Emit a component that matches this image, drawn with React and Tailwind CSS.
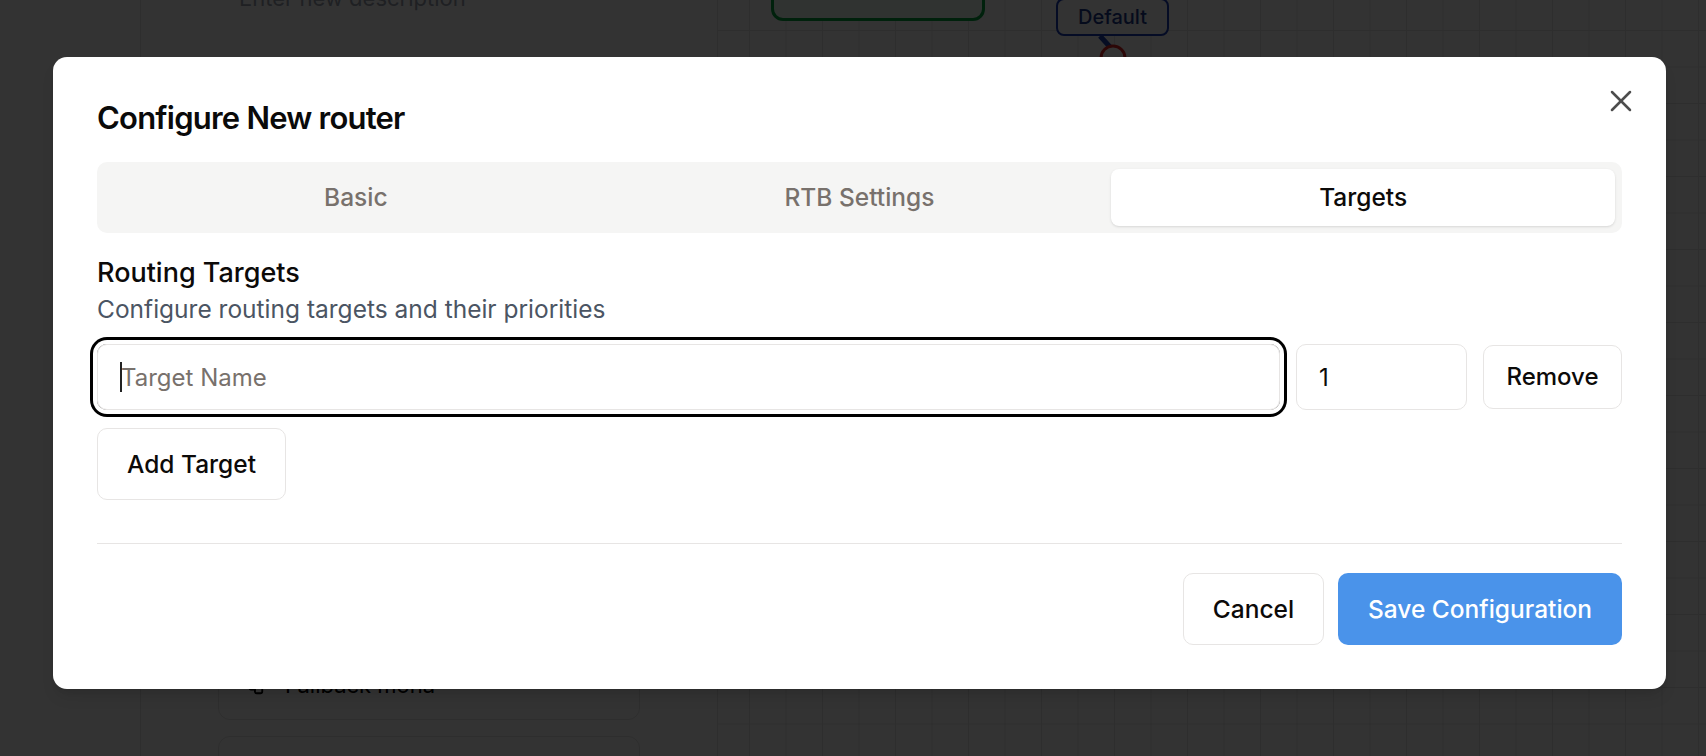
import { X, Workflow } from 'lucide-react';

const tabs = ['Basic', 'RTB Settings', 'Targets'];

export default function App() {
  return (
    <div className="relative h-[756px] w-[1706px] overflow-hidden bg-white font-['Inter',sans-serif]">
      {/* app behind the dialog */}
      <div className="flex h-full">
        <aside className="w-[141px] shrink-0 border-r border-[#e5e5e5]" />
        <div className="flex w-[577px] shrink-0 flex-col justify-between border-r border-[#e5e5e5] px-[77px]">
          <div className="-mt-[18px] pl-[21px] text-[22px] text-gray-400">Enter new description</div>
          <div className="flex flex-col gap-[16px] -mb-[40px]">
            <div className="flex h-[70px] items-center gap-[20px] rounded-[12px] border border-[#e5e5e5] px-[24px]">
              <Workflow className="h-[22px] w-[22px] text-black" />
              <span className="text-[22px] text-black">Fallback mona</span>
            </div>
            <div className="h-[60px] rounded-[12px] border border-[#e5e5e5]" />
          </div>
        </div>
        <div className="relative flex-1 bg-[linear-gradient(to_right,#e4e4e4_1px,transparent_1px),linear-gradient(to_bottom,#e4e4e4_1px,transparent_1px)] [background-size:36.5px_36.5px] [background-position:31px_30px]">
          <div className="absolute left-[53px] top-[-40px] h-[61px] w-[214px] rounded-[12px] border-[3px] border-green-600 bg-green-50" />
          <svg className="absolute left-[330px] top-0" width="80" height="70" viewBox="0 0 80 70">
            <path d="M12 0 L20 30 M52 36 L74 60" stroke="#1e40af" strokeWidth="5" fill="none" />
            <circle cx="65" cy="58" r="12" fill="white" stroke="#dc2626" strokeWidth="3" />
          </svg>
          <div className="absolute left-[338px] top-[-2px] flex h-[38px] w-[113px] items-center justify-center rounded-[8px] border-2 border-blue-800 bg-white text-[20px] font-medium text-blue-900">
            Default
          </div>
        </div>
      </div>

      <div className="absolute inset-0 bg-black/80" />

      {/* dialog */}
      <div role="dialog" className="absolute left-[53px] top-[57px] w-[1613px] rounded-[14px] bg-white px-[44px] pt-[45px] pb-[44px] shadow-lg">
        <button className="absolute right-[27px] top-[26px] text-[#4d4d4d]">
          <X size={36} strokeWidth={1.7} />
        </button>

        <h2 className="text-[31px] font-semibold leading-none tracking-tight text-[#0a0a0a]">Configure New router</h2>

        <div className="mt-[29px] grid h-[71px] grid-cols-3 rounded-[10px] bg-[#f5f5f4] p-[7px]">
          {tabs.map((t) => (
            <div
              key={t}
              className={`flex items-center justify-center rounded-[8px] text-[24.5px] font-medium ${
                t === 'Targets' ? 'bg-white text-[#0c0a09] shadow-sm' : 'text-[#78716c]'
              }`}
            >
              {t}
            </div>
          ))}
        </div>

        <div className="mt-[22px]">
          <h3 className="text-[27px] font-medium leading-[35px] text-[#0c0a09]">Routing Targets</h3>
          <p className="mt-[3px] text-[24.5px] leading-[33px] text-[#4b5563]">Configure routing targets and their priorities</p>
        </div>

        <div className="mt-[18px] flex items-center gap-4">
          <div className="relative flex-1">
            <input
              placeholder="Target Name"
              className="h-[66px] w-full rounded-[10px] border border-[#e7e5e4] px-[23px] text-[24px] text-[#0c0a09] placeholder:text-[#78716c] ring-[3px] ring-black ring-offset-[4px] ring-offset-white outline-none"
            />
            <span className="absolute left-[23px] top-[18px] h-[30px] w-[1.5px] bg-[#222]" />
          </div>
          <input
            readOnly
            value="1"
            className="h-[66px] w-[171px] rounded-[10px] border border-[#e7e5e4] px-[22px] text-[24px] text-[#0c0a09] outline-none"
          />
          <button className="h-[64px] w-[139px] rounded-[10px] border border-[#e7e5e4] bg-white text-[24px] font-medium text-[#0c0a09]">
            Remove
          </button>
        </div>

        <button className="mt-[18px] h-[72px] w-[189px] rounded-[10px] border border-[#e7e5e4] bg-white text-[24.5px] font-medium text-[#0c0a09]">
          Add Target
        </button>

        <div className="mt-[43px] border-t border-[#e7e5e4]" />

        <div className="mt-[29px] flex justify-end gap-[14px]">
          <button className="h-[72px] w-[141px] rounded-[10px] border border-[#e7e5e4] bg-white text-[24.5px] font-medium text-[#0c0a09]">
            Cancel
          </button>
          <button className="h-[72px] w-[284px] rounded-[10px] bg-[#4a93ea] text-[24.5px] font-medium text-white">
            Save Configuration
          </button>
        </div>
      </div>
    </div>
  );
}
